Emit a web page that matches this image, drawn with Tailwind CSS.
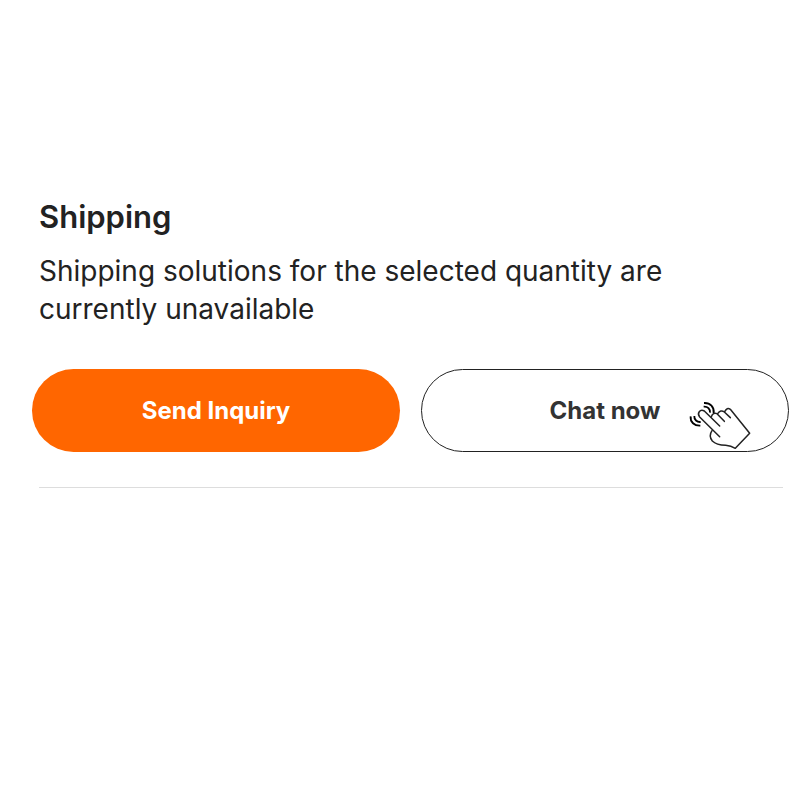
<!DOCTYPE html>
<html lang="en">
<head>
<meta charset="utf-8">
<meta name="viewport" content="width=device-width, initial-scale=1">
<title>Shipping</title>
<script src="https://cdn.jsdelivr.net/npm/@tailwindcss/browser@4"></script>
</head>
<body class="bg-white text-[#222222] font-['Inter',sans-serif]">
<main class="flex min-h-screen flex-col pt-[197px] pr-[11px] pl-8">
  <section class="border-b border-[#dddddd] mr-[6px] ml-[7px] pb-[35px]">
    <h1 class="text-[31px] leading-10 font-semibold">Shipping</h1>
    <p class="mt-[15px] max-w-[660px] text-[28px] leading-[38px] font-normal">Shipping solutions for the selected quantity are currently unavailable</p>
    <div class="mt-[41px] -mr-[6px] -ml-[7px] grid grid-cols-2 gap-[21px]">
      <button type="button" class="h-[83px] rounded-full bg-[#ff6600] text-[24px] font-bold text-white">Send Inquiry</button>
      <button type="button" class="relative h-[83px] rounded-full border border-[#222222] bg-white text-[24px] font-bold text-[#333333]">Chat now
        <svg class="absolute top-[30px] right-[36px] h-[50px] w-[64px]" viewBox="24 30 192 150" fill="none" stroke="#222" stroke-width="4.5" stroke-linecap="round" stroke-linejoin="round" aria-hidden="true">
          <path d="M119 140L59 81C50 70 60 56 73 63L119 108"/>
          <path d="M94 80Q99 66 111 71L133 94"/>
          <path d="M113 71Q122 58 133 66L151 83"/>
          <path d="M134 65Q141 51 151 58L209 130L166 175Q153 167 137 166Q109 165 97 153Q85 138 96 122"/>
          <g stroke="#000" stroke-width="5.5" stroke-linecap="butt">
            <path d="M72 39C91 38 103 51 101 69"/>
            <path d="M71 50C83 49 91 57 90 68"/>
            <path d="M32 79C30 96 43 108 61 107"/>
            <path d="M43 78C42 89 51 97 62 96"/>
          </g>
        </svg>
      </button>
    </div>
  </section>
</main>
</body>
</html>
